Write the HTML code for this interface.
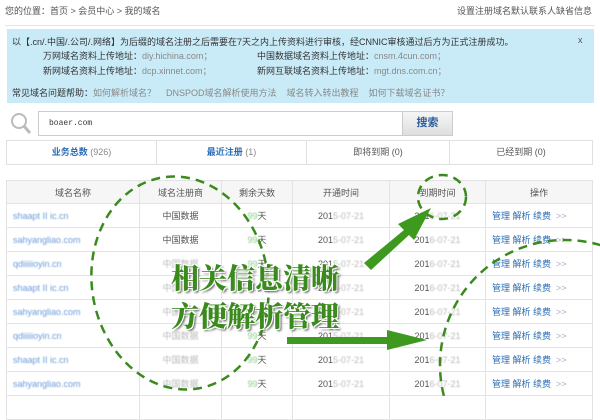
<!DOCTYPE html>
<html><head><meta charset="utf-8"><style>
*{margin:0;padding:0;box-sizing:border-box}
body{width:600px;height:400px;overflow:hidden;background:#fff;font-family:"Liberation Sans","Noto Sans CJK SC",sans-serif;font-size:9px;color:#555;position:relative}
.a{position:absolute;white-space:nowrap}
.blue{color:#888}
table{position:absolute;left:6px;top:180px;width:587px;border-collapse:collapse;table-layout:fixed}
td{border:1px solid #e3e3e3;height:24px;text-align:center;font-size:9px;color:#555;overflow:hidden;white-space:nowrap}
tr.h td{background:#f6f6f6;height:23px}
.d{color:#6b9bd6;text-align:left;padding-left:6px;filter:blur(0.6px)}
.g{color:#bbb;filter:blur(0.5px)}
.op{color:#2a6db5;text-align:left;padding-left:6px}
</style></head><body>
<div class="a" style="left:5px;top:4px">您的位置：首页 &gt; 会员中心 &gt; 我的域名</div>
<div class="a" style="right:8px;top:4px">设置注册域名默认联系人缺省信息</div>
<div class="a" style="left:5px;top:25px;width:590px;height:1px;background:#e5e5e5"></div>
<div class="a" style="left:7px;top:29px;width:587px;height:74px;background:#c9ebf8"></div>
<div class="a" style="left:12px;top:35px;color:#333">以【.cn/.中国/.公司/.网络】为后缀的域名注册之后需要在7天之内上传资料进行审核，经CNNIC审核通过后方为正式注册成功。</div>
<div class="a" style="left:578px;top:35px;color:#555">x</div>
<div class="a" style="left:43px;top:49px;color:#333">万网域名资料上传地址：<span class="blue">diy.hichina.com；</span></div>
<div class="a" style="left:257px;top:49px;color:#333">中国数据域名资料上传地址：<span class="blue">cnsm.4cun.com；</span></div>
<div class="a" style="left:43px;top:64px;color:#333">新网域名资料上传地址：<span class="blue">dcp.xinnet.com；</span></div>
<div class="a" style="left:257px;top:64px;color:#333">新网互联域名资料上传地址：<span class="blue">mgt.dns.com.cn；</span></div>
<div class="a" style="left:12px;top:86px;color:#333">常见域名问题帮助：<span class="blue">如何解析域名？&nbsp;&nbsp;&nbsp; DNSPOD域名解析使用方法 &nbsp;&nbsp;&nbsp;域名转入转出教程 &nbsp;&nbsp;&nbsp;如何下载域名证书？</span></div>
<svg class="a" style="left:10px;top:112px" width="24" height="24"><circle cx="9" cy="9" r="7" fill="none" stroke="#bbb" stroke-width="2"/><line x1="14" y1="14" x2="20" y2="21" stroke="#bbb" stroke-width="3"/></svg>
<div class="a" style="left:38px;top:111px;width:365px;height:25px;border:1px solid #ccc;background:#fff;font-family:'Liberation Mono',monospace;font-size:8px;color:#333;padding:7px 0 0 10px">boaer.com</div>
<div class="a" style="left:402px;top:111px;width:51px;height:25px;border:1px solid #ccc;background:linear-gradient(#f6f6f6,#dedede);color:#2a5d9c;font-weight:bold;font-size:11px;text-align:center;line-height:23px">搜索</div>
<div class="a" style="left:6px;top:140px;width:587px;height:25px;border:1px solid #e0e0e0;display:flex;line-height:23px;text-align:center">
<div style="width:150px;border-right:1px solid #e0e0e0;color:#2a6db5"><b>业务总数</b> <span style="color:#888">(926)</span></div>
<div style="width:150px;border-right:1px solid #e0e0e0;color:#2a6db5"><b>最近注册</b> <span style="color:#888">(1)</span></div>
<div style="width:143px;border-right:1px solid #e0e0e0">即将到期 (0)</div>
<div style="flex:1">已经到期 (0)</div></div>
<table>
<colgroup><col style="width:133px"><col style="width:82px"><col style="width:71px"><col style="width:97px"><col style="width:96px"><col></colgroup>
<tr class="h"><td>域名名称</td><td>域名注册商</td><td>剩余天数</td><td>开通时间</td><td>到期时间</td><td>操作</td></tr>
<tr><td class="d">shaapt II ic.cn</td><td>中国数据</td><td><span class="g" style="color:#8c8">99</span>天</td><td>201<span class="g">5-07-21</span></td><td>201<span class="g">6-07-21</span></td><td class="op">管理 解析 续费 &nbsp;<span style="color:#aac">&gt;&gt;</span></td></tr>
<tr><td class="d">sahyangliao.com</td><td>中国数据</td><td><span class="g" style="color:#8c8">99</span>天</td><td>201<span class="g">5-07-21</span></td><td>201<span class="g">6-07-21</span></td><td class="op">管理 解析 续费 &nbsp;<span style="color:#aac">&gt;&gt;</span></td></tr>
<tr><td class="d">qdiiiiioyin.cn</td><td class="g">中国数据</td><td><span class="g" style="color:#8c8">99</span>天</td><td>201<span class="g">5-07-21</span></td><td>201<span class="g">6-07-21</span></td><td class="op">管理 解析 续费 &nbsp;<span style="color:#aac">&gt;&gt;</span></td></tr>
<tr><td class="d">shaapt II ic.cn</td><td class="g">中国数据</td><td><span class="g" style="color:#8c8">99</span>天</td><td>201<span class="g">5-07-21</span></td><td>201<span class="g">6-07-21</span></td><td class="op">管理 解析 续费 &nbsp;<span style="color:#aac">&gt;&gt;</span></td></tr>
<tr><td class="d">sahyangliao.com</td><td class="g">中国数据</td><td><span class="g" style="color:#8c8">99</span>天</td><td>201<span class="g">5-07-21</span></td><td>201<span class="g">6-07-21</span></td><td class="op">管理 解析 续费 &nbsp;<span style="color:#aac">&gt;&gt;</span></td></tr>
<tr><td class="d">qdiiiiioyin.cn</td><td class="g">中国数据</td><td><span class="g" style="color:#8c8">99</span>天</td><td>201<span class="g">5-07-21</span></td><td>201<span class="g">6-07-21</span></td><td class="op">管理 解析 续费 &nbsp;<span style="color:#aac">&gt;&gt;</span></td></tr>
<tr><td class="d">shaapt II ic.cn</td><td class="g">中国数据</td><td><span class="g" style="color:#8c8">99</span>天</td><td>201<span class="g">5-07-21</span></td><td>201<span class="g">6-07-21</span></td><td class="op">管理 解析 续费 &nbsp;<span style="color:#aac">&gt;&gt;</span></td></tr>
<tr><td class="d">sahyangliao.com</td><td class="g">中国数据</td><td><span class="g" style="color:#8c8">99</span>天</td><td>201<span class="g">5-07-21</span></td><td>201<span class="g">6-07-21</span></td><td class="op">管理 解析 续费 &nbsp;<span style="color:#aac">&gt;&gt;</span></td></tr>
<tr><td class="d"></td><td></td><td></td><td></td><td></td><td></td></tr>
</table>
<svg class="a" style="left:0;top:0" width="600" height="400">
<g fill="none" stroke="#3a8a1e" stroke-width="2.5" stroke-dasharray="9,6">
<ellipse cx="180" cy="283" rx="88" ry="107" transform="rotate(-10 180 283)"/>
<ellipse cx="442" cy="197" rx="24" ry="22"/>
<ellipse cx="565" cy="365" rx="125" ry="125" transform="rotate(-20 565 365)"/>
</g>
<g fill="#3e9a1e">
<polygon points="364,263 404,230 398,224 431,208 414,240 409,235 371,270"/>
<polygon points="287,337 387,337 387,330 427,340 387,350 387,344 287,344"/>
</g>
</svg>
<div class="a" style="left:171px;top:258px;font-family:'Noto Serif CJK SC',serif;font-weight:900;font-size:28px;line-height:38px;color:#3a8a1e;text-shadow:1px 1px 0 #fff,-1px -1px 0 #fff,1px -1px 0 #fff,-1px 1px 0 #fff,2px 2px 2px #555">相关信息清晰<br>方便解析管理</div>
</body></html>
